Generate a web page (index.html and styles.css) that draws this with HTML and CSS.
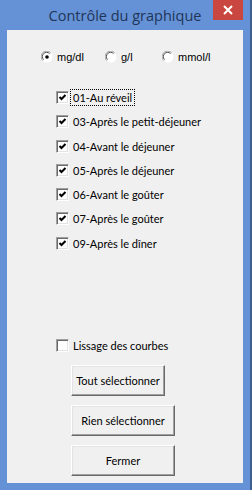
FILE: index.html
```html
<!DOCTYPE html>
<html>
  <head>
    <meta charset="utf-8" />
    <title>Contrôle du graphique</title>
    <link rel="stylesheet" href="styles.css">
  </head>
  <body>
    <div id="window">
      <div id="titlebar">
        <span id="title">Contrôle du graphique</span>
        <span id="close">
          <svg width="10" height="10" viewBox="0 0 10 10"><path d="M1 1 L9 9 M9 1 L1 9" stroke="#fff" stroke-width="2"/></svg>
        </span>
      </div>

      <div id="client">
        <div id="units">
          <label class="radio">
            <svg width="12" height="12" viewBox="0 0 12 12">
              <circle cx="6" cy="6" r="5.5" fill="#fff"/>
              <path d="M1.7 9.6 A5 5 0 0 1 9.6 1.7" stroke="#a0a0a0" fill="none"/>
              <path d="M2.6 8.6 A3.8 3.8 0 0 1 8.6 2.6" stroke="#505050" fill="none"/>
              <circle cx="6" cy="6" r="1.8" fill="#000"/>
            </svg>
            mg/dl
          </label>
          <label class="radio">
            <svg width="12" height="12" viewBox="0 0 12 12">
              <circle cx="6" cy="6" r="5.5" fill="#fff"/>
              <path d="M1.7 9.6 A5 5 0 0 1 9.6 1.7" stroke="#a0a0a0" fill="none"/>
              <path d="M2.6 8.6 A3.8 3.8 0 0 1 8.6 2.6" stroke="#505050" fill="none"/>
            </svg>
            g/l
          </label>
          <label class="radio">
            <svg width="12" height="12" viewBox="0 0 12 12">
              <circle cx="6" cy="6" r="5.5" fill="#fff"/>
              <path d="M1.7 9.6 A5 5 0 0 1 9.6 1.7" stroke="#a0a0a0" fill="none"/>
              <path d="M2.6 8.6 A3.8 3.8 0 0 1 8.6 2.6" stroke="#505050" fill="none"/>
            </svg>
            mmol/l
          </label>
        </div>

        <div id="series">
          <label class="check"><span class="box checked"></span><span class="focus">01-Au réveil</span></label>
          <label class="check"><span class="box checked"></span>03-Après le petit-déjeuner</label>
          <label class="check"><span class="box checked"></span>04-Avant le déjeuner</label>
          <label class="check"><span class="box checked"></span>05-Après le déjeuner</label>
          <label class="check"><span class="box checked"></span>06-Avant le goûter</label>
          <label class="check"><span class="box checked"></span>07-Après le goûter</label>
          <label class="check"><span class="box checked"></span>09-Après le dîner</label>
        </div>

        <label class="check" id="smooth"><span class="box"></span>Lissage des courbes</label>

        <div id="actions">
          <button class="btn btn-short">Tout sélectionner</button>
          <button class="btn">Rien sélectionner</button>
          <button class="btn">Fermer</button>
        </div>
      </div>
    </div>
  </body>
</html>
```

FILE: styles.css
```css
body {
  margin: 0;
  background-color: #3f5f8f;
  width: 252px;
  height: 490px;
  overflow: hidden;
}

#window {
  width: 250px;
  height: 490px;
  box-sizing: border-box;
  padding: 0 7px 7px 7px;
  background-color: #6592d6;
  display: flex;
  flex-direction: column;
}

#titlebar {
  height: 30px;
  display: grid;
  grid-template-columns: 1fr auto 1fr;
  margin: 0 -7px;
}

#title {
  grid-column: 2;
  font-family: 'Open Sans', sans-serif;
  font-size: 14.5px;
  color: #1f3558;
  line-height: 30px;
  padding-top: 1px;
}

#close {
  grid-column: 3;
  justify-self: end;
  width: 30px;
  height: 20px;
  margin-right: 7px;
  background-color: #c9473f;
  display: flex;
  align-items: center;
  justify-content: center;
}

#client {
  flex: 1;
  background-color: #f0f0f0;
  padding: 21px 0 0 34px;
  font-family: 'Liberation Sans', sans-serif;
  color: #000;
}

#units {
  display: flex;
  height: 12px;
  align-items: center;
  font-size: 11px;
}

.radio {
  display: flex;
  align-items: center;
  gap: 4px;
}

.radio:nth-child(1) { width: 64px; }
.radio:nth-child(2) { width: 57px; }

#series {
  margin: 28px 0 0 15px;
  display: flex;
  flex-direction: column;
  gap: 11.3px;
}

.check {
  display: flex;
  align-items: center;
  gap: 4px;
  font-family: 'Lato', sans-serif;
  font-size: 11px;
  line-height: 13px;
  height: 13px;
  color: #000;
}

.box {
  flex: none;
  width: 13px;
  height: 13px;
  box-sizing: border-box;
  background-color: #fff;
  border-style: solid;
  border-width: 1px;
  border-color: #a0a0a0 #fff #fff #a0a0a0;
  box-shadow: inset 1px 1px 0 #696969, inset -1px -1px 0 #e3e3e3;
}

.box.checked {
  background-image: url("data:image/svg+xml;utf8,<svg xmlns='http://www.w3.org/2000/svg' width='11' height='11' viewBox='0 0 11 11'><path d='M2.5 5 L4.5 7 L8.5 3' stroke='black' stroke-width='2' fill='none'/></svg>");
  background-position: center;
  background-repeat: no-repeat;
}

.focus {
  outline: 1px dotted #000;
  outline-offset: 1px;
  padding: 0 1px;
  margin-left: -1px;
}

#smooth {
  margin: 89px 0 0 15px;
}

#actions {
  margin: 13px 0 0 30px;
  display: flex;
  flex-direction: column;
  align-items: flex-start;
  gap: 9px;
}

.btn {
  width: 104px;
  height: 31px;
  box-sizing: border-box;
  background-color: #f0f0f0;
  font-family: 'Lato', sans-serif;
  font-size: 11px;
  color: #000;
  border-style: solid;
  border-width: 1px;
  border-color: #fff #696969 #696969 #fff;
  box-shadow: inset -1px -1px 0 #a0a0a0, inset 1px 1px 0 #e3e3e3;
  padding: 0;
}

.btn-short {
  width: 94px;
}
```
